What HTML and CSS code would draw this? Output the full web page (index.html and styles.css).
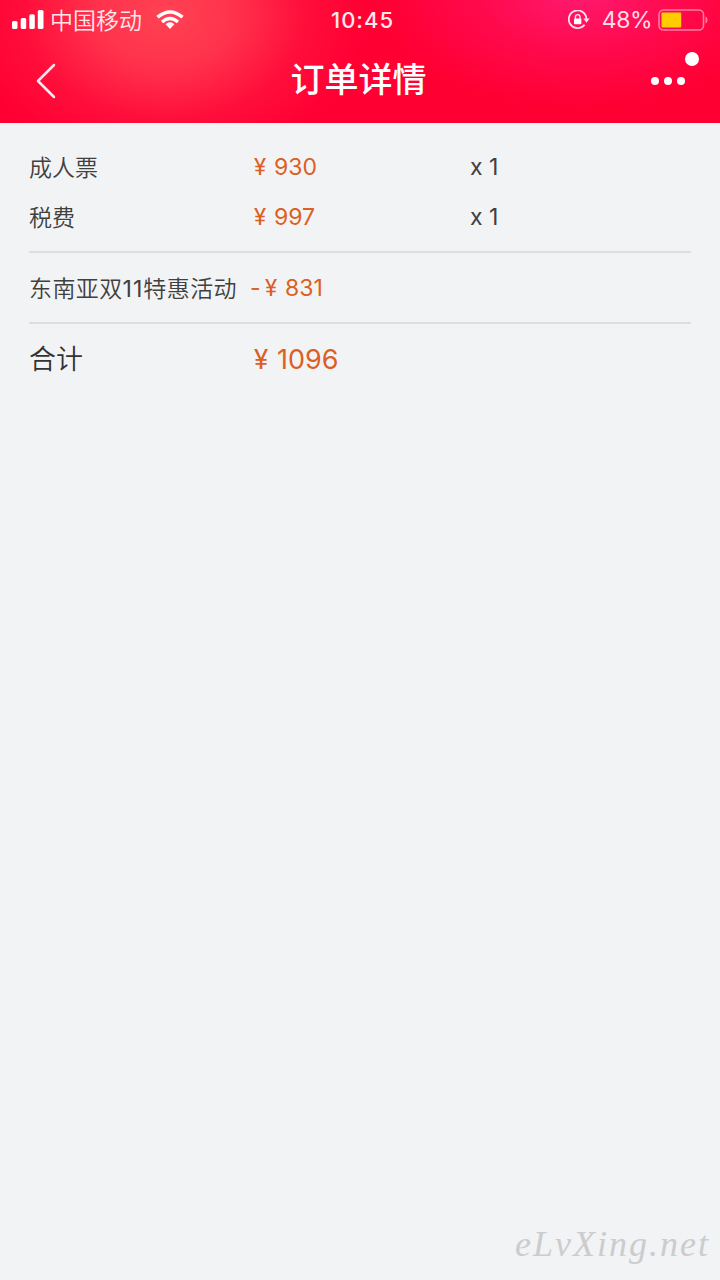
FILE: index.html
```html
<!DOCTYPE html>
<html lang="zh-CN">
<head>
    <meta charset="UTF-8">
    <meta name="viewport" content="width=device-width, initial-scale=1.0">
    <title>订单详情</title>
    <link rel="stylesheet" href="styles.css">
</head>
<body>
    <header class="header">
        <div class="status">
            <svg class="signal" width="32" height="20" viewBox="0 0 32 20" fill="#fff">
                <rect x="0" y="11" width="5.5" height="8" rx="1.6"/>
                <rect x="8.7" y="8" width="5.5" height="11" rx="1.6"/>
                <rect x="17.3" y="4.3" width="5.5" height="14.7" rx="1.6"/>
                <rect x="25.8" y="0" width="5.7" height="19" rx="1.6"/>
            </svg>
            <span class="carrier">中国移动</span>
            <svg class="wifi" width="28" height="20" viewBox="0 0 28 20" fill="none" stroke="#fff">
                <path d="M1.5 7.2Q14-3.2 26.5 7.2" stroke-width="3.6"/>
                <path d="M6 12Q14 5.2 22 12" stroke-width="3.4"/>
                <path d="M14 12.3c-1.8 0-3.2.8-4.3 1.9L14 19l4.3-4.8c-1.1-1.1-2.5-1.9-4.3-1.9z" fill="#fff" stroke="none"/>
            </svg>
            <span class="time">10:45</span>
            <svg class="lock" width="22" height="20" viewBox="0 0 22 20" fill="none" stroke="#ffe0ea" stroke-width="1.8">
                <path d="M16.6 14.6A8.8 8.8 0 1 1 18.4 9"/>
                <path d="M15.3 8.6h6.3l-3.1 4.2z" fill="#ffe0ea" stroke="none"/>
                <rect x="6" y="8.6" width="7.4" height="5.6" rx=".8" fill="#fff" stroke="none"/>
                <path d="M7.4 9V6.9a2.3 2.3 0 0 1 4.6 0V9" stroke-width="1.4"/>
            </svg>
            <span class="percent">48%</span>
            <svg class="battery" width="51" height="22" viewBox="0 0 51 22">
                <rect x="1" y="1" width="44.5" height="20" rx="4.5" fill="none" stroke="#ff7da3" stroke-width="1.6"/>
                <rect x="3.5" y="3.5" width="19.7" height="15" rx="1" fill="#ffcc00"/>
                <path d="M47.5 7.5c2.7 1 2.7 6 0 7z" fill="#ff7da3"/>
            </svg>
        </div>
        <div class="nav">
            <svg class="back" width="20" height="36" viewBox="0 0 20 36" fill="none" stroke="#ffe8ec" stroke-width="2.5" stroke-linecap="round" stroke-linejoin="round">
                <path d="M18 2L2 18l16 16"/>
            </svg>
            <h1 class="title">订单详情</h1>
            <div class="more">
                <i class="dot"></i><i class="dot"></i><i class="dot"></i>
                <i class="badge"></i>
            </div>
        </div>
    </header>

    <main class="order">
        <section class="group">
            <div class="row">
                <span class="name">成人票</span>
                <span class="price"><i class="yen">¥</i>930</span>
                <span class="count">x 1</span>
            </div>
            <div class="row">
                <span class="name">税费</span>
                <span class="price"><i class="yen">¥</i>997</span>
                <span class="count">x 1</span>
            </div>
        </section>
        <section class="group">
            <div class="row">
                <span class="name activity">东南亚双<span class="num">11</span>特惠活动</span>
                <span class="price discount"><i class="minus">-</i><i class="yen">¥</i>831</span>
            </div>
        </section>
        <section class="group">
            <div class="row total">
                <span class="name">合计</span>
                <span class="price"><i class="yen">¥</i>1096</span>
            </div>
        </section>
    </main>

    <footer class="watermark">eLvXing.net</footer>
</body>
</html>
```
FILE: styles.css
```css
* {
    box-sizing: border-box;
}
body {
    margin: 0;
    min-height: 1280px;
    display: flex;
    flex-direction: column;
    background-color: #f2f3f5;
    color: #404040;
    font-family: Inter, "Noto Sans CJK SC", sans-serif;
}
i {
    font-style: normal;
}

/* header */
.header {
    height: 123px;
    color: #fff;
    background:
        radial-gradient(ellipse 200px 150px at 165px 15px, rgba(255, 70, 85, 0.95) 0%, rgba(255, 62, 82, 0.8) 35%, rgba(255, 35, 70, 0.4) 70%, rgba(255, 0, 51, 0) 100%),
        radial-gradient(ellipse 200px 115px at 580px -8px, #ff1a70 0%, rgba(255, 15, 92, 0.65) 50%, rgba(255, 0, 51, 0) 100%),
        #ff0033;
}
.status {
    display: flex;
    align-items: center;
    height: 40px;
    padding: 0 11px 0 12px;
}
.carrier {
    margin: -3px 0 0 6px;
    font-size: 23px;
    font-weight: 350;
    color: #ffe8ec;
}
.wifi {
    margin-left: 14px;
}
.time {
    margin-left: 147px;
    font-size: 22px;
    font-weight: 500;
    letter-spacing: 1px;
    color: #ffe8ec;
}
.lock {
    margin-left: auto;
}
.percent {
    margin: 0 6px 0 12px;
    font-size: 23px;
    letter-spacing: -0.5px;
    color: #ffdce6;
}
.nav {
    display: grid;
    grid-template-columns: 1fr auto 1fr;
    align-items: center;
    height: 81px;
    padding: 0 36px 0 35px;
}
.back {
    margin-left: 1px;
}
.title {
    margin: 0 2px 2px 0;
    font-size: 34px;
    line-height: 40px;
    font-weight: 500;
}
.more {
    position: relative;
    display: flex;
    justify-content: flex-end;
    gap: 5px;
    margin-right: -1px;
}
.dot {
    width: 8px;
    height: 8px;
    border-radius: 50%;
    background-color: #fff;
}
.badge {
    position: absolute;
    top: -25px;
    right: -14px;
    width: 14px;
    height: 14px;
    border-radius: 50%;
    background-color: #fff;
}

/* price list */
.order {
    flex: 1;
    padding: 19px 29px 0;
}
.group {
    padding-bottom: 9px;
    border-bottom: 2px solid #dddee0;
}
.group + .group {
    padding-top: 10px;
}
.group:last-child {
    border-bottom: none;
}
.row {
    display: grid;
    grid-template-columns: 225px 216px 1fr;
    align-items: center;
    height: 50px;
    font-size: 23px;
    white-space: nowrap;
}
.name {
    margin-top: -3px;
    font-weight: 350;
}
.activity {
    letter-spacing: 0.4px;
}
.num {
    font-weight: 400;
    letter-spacing: 1px;
}
.price {
    color: #dc5f24;
}
.yen {
    display: inline-block;
    width: 20px;
    font-family: Roboto, sans-serif;
}
.discount {
    margin-left: -4px;
}
.minus {
    display: inline-block;
    width: 15px;
}
.total {
    font-size: 27px;
}
.total .name {
    color: #333;
}
.total .yen {
    width: 23px;
}

.watermark {
    height: 57px;
    padding-right: 10px;
    text-align: right;
    font-family: "Liberation Serif", cursive;
    font-size: 36px;
    font-style: italic;
    letter-spacing: 2px;
    color: #cbccce;
}
```
